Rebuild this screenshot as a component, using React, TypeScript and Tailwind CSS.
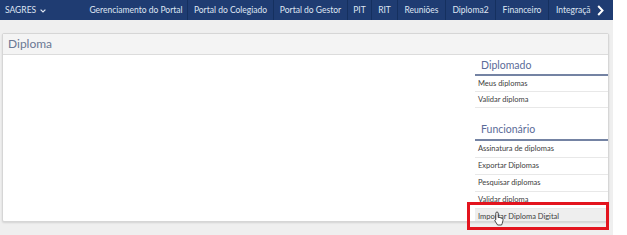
import React from 'react';

const NAV_ITEMS = [
  { label: 'Gerenciamento do Portal', w: 'w-[103px]' },
  { label: 'Portal do Colegiado', w: 'w-[86px]' },
  { label: 'Portal do Gestor', w: 'w-[74px]' },
  { label: 'PIT', w: 'w-[24px]' },
  { label: 'RIT', w: 'w-[26px]' },
  { label: 'Reuniões', w: 'w-[48px]' },
  { label: 'Diploma2', w: 'w-[50px]' },
  { label: 'Financeiro', w: 'w-[53px]' },
];

const DIPLOMADO = ['Meus diplomas', 'Validar diploma'];
const FUNCIONARIO = [
  'Assinatura de diplomas',
  'Exportar Diplomas',
  'Pesquisar diplomas',
  'Validar diploma',
  'Importar Diploma Digital',
];

const SideHeader: React.FC<{ title: string; tall?: boolean }> = ({ title, tall }) => (
  <div
    className={`border-b-2 border-[#7483a3] pl-[6px] text-[10.5px] leading-[14px] text-[#5a6b98] ${
      tall ? 'h-[19px]' : 'h-[18px]'
    }`}
  >
    {title}
  </div>
);

const SideItem: React.FC<{ label: string; tall?: boolean; active?: boolean }> = ({ label, tall, active }) => (
  <div
    className={`border-b border-[#e8e8e8] pl-[3px] text-[7.5px] text-[#404040] ${
      tall ? 'h-[17px] leading-[16px]' : 'h-[16px] leading-[15px]'
    } ${active ? 'bg-[#eeeeee]' : ''}`}
  >
    {label}
  </div>
);

export default function App() {
  return (
    <div className="relative h-[235px] w-[627px] overflow-hidden bg-white font-['Lato','Open_Sans',sans-serif]">
      {/* top nav */}
      <div className="flex h-[20px] w-[613px] items-center bg-[#1f3c72] text-[8.5px] text-[#dfe6f2]">
        <div className="flex w-[85px] items-center gap-[4px] pl-[5px]">
          SAGRES
          <svg width="6" height="4" viewBox="0 0 6 4" className="mt-[1px]">
            <path d="M0.6 0.6 L3 3 L5.4 0.6" fill="none" stroke="#dfe6f2" strokeWidth="1.2" />
          </svg>
        </div>
        {NAV_ITEMS.map((item) => (
          <div
            key={item.label}
            className={`${item.w} flex h-full items-center justify-center whitespace-nowrap border-r border-[#15305f]`}
          >
            {item.label}
          </div>
        ))}
        <div className="flex h-full flex-1 items-center justify-between pl-[7px] pr-[9px] whitespace-nowrap">
          <span>Integraçã</span>
          <svg width="7" height="11" viewBox="0 0 7 11">
            <path d="M1.2 1 L5.5 5.5 L1.2 10" fill="none" stroke="#ffffff" strokeWidth="2" />
          </svg>
        </div>
      </div>

      {/* content */}
      <div className="h-[215px] w-[613px] bg-[#efefef] pl-[2px] pr-[4px] pt-[13px]">
        <div className="flex h-[189px] flex-col overflow-hidden rounded-[2px] border border-[#d6d6d6] bg-white shadow-[0_1px_2px_rgba(0,0,0,0.12)]">
          <div className="h-[21px] shrink-0 border-b border-[#dcdcdc] bg-[#f4f4f4] pl-[5px] text-[12px] leading-[20px] text-[#6a7893]">
            Diploma
          </div>
          <div className="flex flex-1">
            <div className="flex-1" />
            <div className="w-[133px] pt-[3px]">
              <SideHeader title="Diplomado" />
              {DIPLOMADO.map((l) => (
                <SideItem key={l} label={l} />
              ))}
              <div className="mt-[14px]">
                <SideHeader title="Funcionário" tall />
              </div>
              {FUNCIONARIO.map((l, i) => (
                <SideItem key={l} label={l} tall active={i === FUNCIONARIO.length - 1} />
              ))}
            </div>
          </div>
        </div>
      </div>

      {/* annotation box */}
      <div className="pointer-events-none absolute left-[467px] top-[202px] h-[28px] w-[142px] border-[3px] border-[#e3141e]" />

      {/* cursor */}
      <svg className="absolute left-[494px] top-[211px]" width="10" height="15" viewBox="0 0 10 15">
        <path
          d="M3 1 C3.8 1 4.2 1.5 4.2 2.2 L4.2 6.5 L5 6.3 L6 6.6 L7 6.9 L8.3 7.4 C9 7.8 9.2 8.4 9 9.3 L8.2 12.5 L7.6 14 L3.6 14 L1 10 C0.6 9.2 1 8.6 1.7 8.7 L1.8 8.8 L1.8 2.2 C1.8 1.5 2.2 1 3 1 Z"
          fill="#ffffff"
          stroke="#222"
          strokeWidth="0.8"
        />
      </svg>
    </div>
  );
}
